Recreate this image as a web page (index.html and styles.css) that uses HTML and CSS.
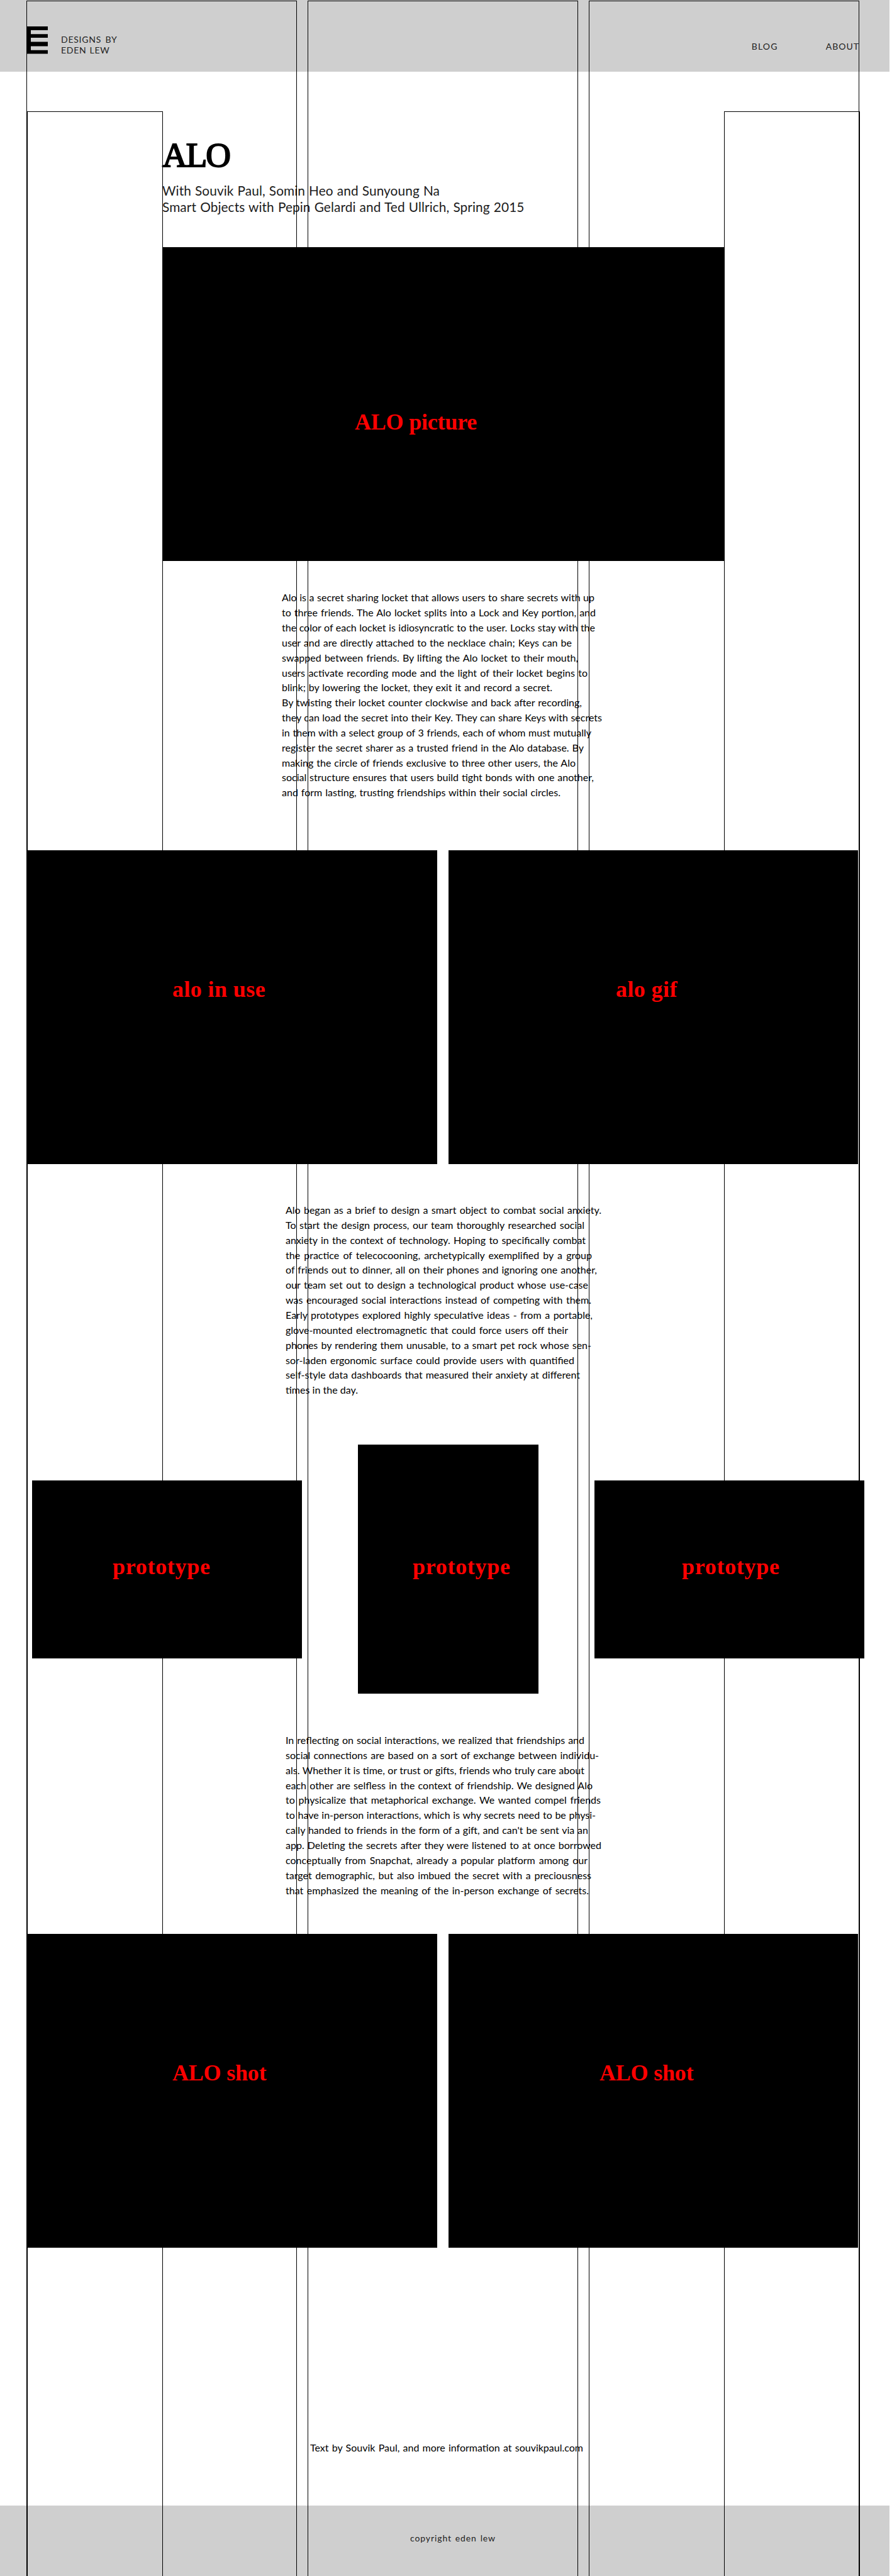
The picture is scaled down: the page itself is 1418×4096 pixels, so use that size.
FILE: index.html
```html
<!DOCTYPE html>
<html lang="en">
<head>
<meta charset="utf-8">
<title>ALO – Designs by Eden Lew</title>
<link rel="stylesheet" href="styles.css">
</head>
<body>
<div class="page">
  <header class="header">
    <a class="brand">
      <svg class="logo" viewBox="0 0 33 44" width="33" height="44"><path d="M0 0H33V6H6V12.200H33V18.100H6V24.500H33V31.400H6V37.800H33V43.600H0Z"/></svg>
      <span class="brand-name"><span class="fit" style="width:89.500px">DESIGNS BY</span><span class="fit" style="width:77.500px">EDEN LEW</span></span>
    </a>
    <nav class="nav"><a class="blog">BLOG</a><a class="about">ABOUT</a></nav>
  </header>

  <main class="main">
    <section class="intro">
      <h1 class="title">ALO</h1>
      <p class="credits">
        <span class="fit" style="width:441px">With Souvik Paul, Somin Heo and Sunyoung Na</span>
        <span class="fit" style="width:575.500px">Smart Objects with Pepin Gelardi and Ted Ullrich, Spring 2015</span>
      </p>
    </section>

    <figure class="shot hero"><figcaption class="caps">ALO picture</figcaption></figure>

    <p class="copy first">
      <span class="fit" style="width:497px">Alo is a secret sharing locket that allows users to share secrets with up</span>
      <span class="fit" style="width:499px">to three friends. The Alo locket splits into a Lock and Key portion, and</span>
      <span class="fit" style="width:498px">the color of each locket is idiosyncratic to the user. Locks stay with the</span>
      <span class="fit" style="width:461px">user and are directly attached to the necklace chain; Keys can be</span>
      <span class="fit" style="width:471px">swapped between friends. By lifting the Alo locket to their mouth,</span>
      <span class="fit" style="width:486px">users activate recording mode and the light of their locket begins to</span>
      <span class="fit" style="width:430px">blink; by lowering the locket, they exit it and record a secret.</span>
      <span class="fit" style="width:477px">By twisting their locket counter clockwise and back after recording,</span>
      <span class="fit" style="width:509px">they can load the secret into their Key. They can share Keys with secrets</span>
      <span class="fit" style="width:492px">in them with a select group of 3 friends, each of whom must mutually</span>
      <span class="fit" style="width:480px">register the secret sharer as a trusted friend in the Alo database. By</span>
      <span class="fit" style="width:467px">making the circle of friends exclusive to three other users, the Alo</span>
      <span class="fit" style="width:496px">social structure ensures that users build tight bonds with one another,</span>
      <span class="fit" style="width:443px">and form lasting, trusting friendships within their social circles.</span>
    </p>

    <div class="pair">
      <figure class="shot"><figcaption>alo in use</figcaption></figure>
      <figure class="shot gif"><figcaption>alo gif</figcaption></figure>
    </div>

    <p class="copy second">
      <span class="fit" style="width:502px">Alo began as a brief to design a smart object to combat social anxiety.</span>
      <span class="fit" style="width:475px">To start the design process, our team thoroughly researched social</span>
      <span class="fit" style="width:477px">anxiety in the context of technology. Hoping to specifically combat</span>
      <span class="fit" style="width:487px">the practice of telecocooning, archetypically exemplified by a group</span>
      <span class="fit" style="width:495px">of friends out to dinner, all on their phones and ignoring one another,</span>
      <span class="fit" style="width:481px">our team set out to design a technological product whose use-case</span>
      <span class="fit" style="width:486px">was encouraged social interactions instead of competing with them.</span>
      <span class="fit" style="width:488px">Early prototypes explored highly speculative ideas - from a portable,</span>
      <span class="fit" style="width:449px">glove-mounted electromagnetic that could force users off their</span>
      <span class="fit" style="width:486px">phones by rendering them unusable, to a smart pet rock whose sen-</span>
      <span class="fit" style="width:459px">sor-laden ergonomic surface could provide users with quantified</span>
      <span class="fit" style="width:468px">self-style data dashboards that measured their anxiety at different</span>
      <span class="fit" style="width:115px">times in the day.</span>
    </p>

    <div class="prototypes">
      <figure class="shot side"><figcaption>prototype</figcaption></figure>
      <figure class="shot tall"><figcaption>prototype</figcaption></figure>
      <figure class="shot side"><figcaption>prototype</figcaption></figure>
    </div>

    <p class="copy third">
      <span class="fit" style="width:475px">In reflecting on social interactions, we realized that friendships and</span>
      <span class="fit" style="width:498px">social connections are based on a sort of exchange between individu-</span>
      <span class="fit" style="width:475px">als. Whether it is time, or trust or gifts, friends who truly care about</span>
      <span class="fit" style="width:488px">each other are selfless in the context of friendship. We designed Alo</span>
      <span class="fit" style="width:501px">to physicalize that metaphorical exchange. We wanted compel friends</span>
      <span class="fit" style="width:493px">to have in-person interactions, which is why secrets need to be physi-</span>
      <span class="fit" style="width:481px">cally handed to friends in the form of a gift, and can't be sent via an</span>
      <span class="fit" style="width:502px">app. Deleting the secrets after they were listened to at once borrowed</span>
      <span class="fit" style="width:480px">conceptually from Snapchat, already a popular platform among our</span>
      <span class="fit" style="width:486px">target demographic, but also imbued the secret with a preciousness</span>
      <span class="fit" style="width:482px">that emphasized the meaning of the in-person exchange of secrets.</span>
    </p>

    <div class="pair">
      <figure class="shot"><figcaption class="caps">ALO shot</figcaption></figure>
      <figure class="shot last"><figcaption class="caps">ALO shot</figcaption></figure>
    </div>

    <p class="copy source"><span class="fit" style="width:434px">Text by Souvik Paul, and more information at souvikpaul.com</span></p>
  </main>

  <footer class="footer"><span class="fit" style="width:136px">copyright eden lew</span></footer>

  <!-- layout guides drawn over the whole page -->
  <div class="guides">
    <i class="column c1"></i><i class="column c2"></i><i class="column c3"></i>
    <i class="margin m1"></i><i class="margin m2"></i>
  </div>
</div>
</body>
</html>
```
FILE: styles.css
```css
* { box-sizing: border-box; }
body { margin: 0; background: #fff; }
h1, p, figure { margin: 0; }

.page {
  position: relative;
  width: 1418px;
  height: 4096px;
  overflow: hidden;
  display: flex;
  flex-direction: column;
  font-family: Lato, "Liberation Sans", sans-serif;
  color: #000;
}

/* one set line of copy, spread to its measure */
.fit {
  display: block;
  white-space: nowrap;
  text-align: justify;
  text-align-last: justify;
}

.header {
  width: 1414px;
  height: 114px;
  flex: none;
  background: #cfcfcf;
  display: flex;
  justify-content: space-between;
  align-items: flex-start;
  padding: 41.500px 49px 0 43px;
  font-size: 14px;
  color: #222;
}
.brand { display: flex; gap: 21px; }
.logo { display: block; fill: #000; }
.brand-name { padding-top: 12px; line-height: 17.600px; letter-spacing: .75px; word-spacing: -1px; }
.nav { display: flex; gap: 76px; padding-top: 23px; line-height: 17px; }
.blog { letter-spacing: 1.200px; }
.about { letter-spacing: 1px; margin-right: -1px; }

.main { display: flex; flex-direction: column; align-items: flex-start; flex: 1; }

.intro { padding: 103px 0 0 258px; }
.title {
  font: 400 55px/60px "Liberation Serif", serif;
  letter-spacing: -2px;
  -webkit-text-stroke: 2px #000;
}
.credits { padding-top: 12.700px; font-size: 20.800px; line-height: 26.300px; letter-spacing: .1px; word-spacing: -2px; color: #1c1c1c; }

.shot { position: relative; z-index: 1; background: #000; height: 499px; }
.shot figcaption {
  font: 700 36px/40px "Liberation Serif", serif;
  letter-spacing: .4px;
  color: #f00;
  white-space: nowrap;
}
.shot .caps { letter-spacing: -.2px; }
.hero { width: 894px; margin: 51px 0 0 258px; padding: 258px 0 0 306px; }

.copy { font-size: 16px; line-height: 23.840px; word-spacing: -2px; }
.first { margin: 46px 0 0 448px; }
.second { margin: 61px 0 0 454px; }
.third { margin: 62px 0 0 454px; }
.source { margin: 306px 0 0 493px; }

.pair { display: grid; grid-template-columns: 653px 651px; gap: 18px; margin-left: 42px; }
.pair .shot { padding: 201px 0 0 232px; }
.pair .gif { padding-left: 266px; }
.pair .last { padding-left: 240px; }
.first + .pair { margin-top: 80px; }
.third + .pair { margin-top: 58px; }

.prototypes {
  display: grid;
  grid-template-columns: 429px 287px 429px;
  column-gap: 89px;
  align-items: center;
  margin: 75px 0 0 51px;
}
.side { height: 283px; padding: 117px 0 0 128px; }
.side:last-child { padding-left: 139px; }
.tall { height: 396px; padding: 174px 0 0 87px; }
.prototypes figcaption { letter-spacing: .7px; }

.footer {
  width: 1414px;
  height: 112px;
  flex: none;
  padding: 43px 0 0 652px;
  background: #cfcfcf;
  font-size: 14px;
  line-height: 17px;
  letter-spacing: .9px;
  word-spacing: -1px;
  color: #222;
}

.guides i { position: absolute; bottom: 0; border: 1px solid #000; border-bottom: 0; }
.column { top: 1px; width: 430px; }
.c1 { left: 42px; }
.c2 { left: 489px; }
.c3 { left: 936px; }
.margin { top: 177px; width: 216px; }
.m1 { left: 43px; }
.m2 { left: 1151px; }
```
